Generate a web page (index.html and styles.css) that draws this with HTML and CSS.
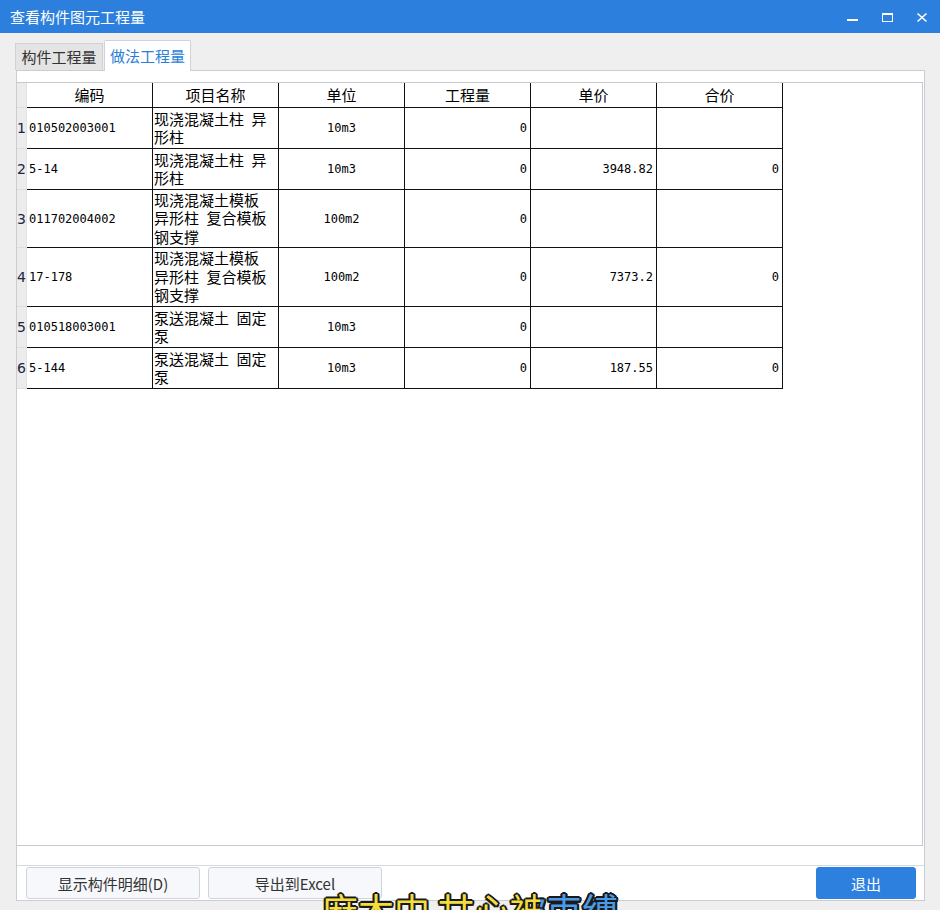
FILE: index.html
```html
<!DOCTYPE html>
<html lang="zh-CN">
<head>
<meta charset="utf-8">
<title>查看构件图元工程量</title>
<link rel="stylesheet" href="styles.css">
</head>
<body>
<div class="window">
  <div class="titlebar">
    <span class="title">查看构件图元工程量</span>
    <svg class="controls" width="100" height="33" viewBox="0 0 100 33">
      <rect x="7" y="19" width="11" height="2" fill="#fff"/>
      <rect x="42.5" y="13.5" width="10" height="8" fill="none" stroke="#fff" stroke-width="1"/>
      <rect x="42" y="13" width="11" height="2" fill="#fff"/>
      <path d="M77.5 13.5 L86.5 21.5 M86.5 13.5 L77.5 21.5" stroke="#fff" stroke-width="1.6" fill="none"/>
    </svg>
  </div>

  <div class="tabs">
    <div class="tab">构件工程量</div>
    <div class="tab active">做法工程量</div>
  </div>

  <div class="panel">
    <div class="panel-top"></div>
    <div class="gridbox">
      <div class="grid">
        <div class="rh"></div>
        <div class="hd">编码</div>
        <div class="hd">项目名称</div>
        <div class="hd">单位</div>
        <div class="hd">工程量</div>
        <div class="hd">单价</div>
        <div class="hd">合价</div>

        <div class="rh">1</div>
        <div class="c code">010502003001</div>
        <div class="c name">现浇混凝土柱&ensp;异<br>形柱</div>
        <div class="c unit">10m3</div>
        <div class="c num">0</div>
        <div class="c num"></div>
        <div class="c num"></div>

        <div class="rh">2</div>
        <div class="c code">5-14</div>
        <div class="c name">现浇混凝土柱&ensp;异<br>形柱</div>
        <div class="c unit">10m3</div>
        <div class="c num">0</div>
        <div class="c num">3948.82</div>
        <div class="c num">0</div>

        <div class="rh">3</div>
        <div class="c code">011702004002</div>
        <div class="c name">现浇混凝土模板<br>异形柱&ensp;复合模板<br>钢支撑</div>
        <div class="c unit">100m2</div>
        <div class="c num">0</div>
        <div class="c num"></div>
        <div class="c num"></div>

        <div class="rh">4</div>
        <div class="c code">17-178</div>
        <div class="c name">现浇混凝土模板<br>异形柱&ensp;复合模板<br>钢支撑</div>
        <div class="c unit">100m2</div>
        <div class="c num">0</div>
        <div class="c num">7373.2</div>
        <div class="c num">0</div>

        <div class="rh">5</div>
        <div class="c code">010518003001</div>
        <div class="c name">泵送混凝土&ensp;固定<br>泵</div>
        <div class="c unit">10m3</div>
        <div class="c num">0</div>
        <div class="c num"></div>
        <div class="c num"></div>

        <div class="rh">6</div>
        <div class="c code">5-144</div>
        <div class="c name">泵送混凝土&ensp;固定<br>泵</div>
        <div class="c unit">10m3</div>
        <div class="c num">0</div>
        <div class="c num">187.55</div>
        <div class="c num">0</div>
      </div>
    </div>
    <div class="panel-gap"></div>
    <div class="btnrow">
      <button class="btn">显示构件明细(D)</button>
      <button class="btn">导出到Excel</button>
      <button class="btn primary">退出</button>
    </div>
  </div>

  <div class="subtitle">麻木中 甘心被束缚</div>
  <div class="subtitle sub-blue">麻木中 甘心被束缚</div>
</div>
</body>
</html>
```

FILE: styles.css
```css
html, body {
  margin: 0;
  padding: 0;
}
body {
  width: 940px;
  height: 910px;
  overflow: hidden;
  background: #efefef;
  font-family: "Noto Sans CJK SC", "Noto Sans", sans-serif;
  color: #000;
}
.window {
  position: relative;
  width: 940px;
  height: 910px;
  overflow: hidden;
  background: #efefef;
}
.titlebar {
  height: 33px;
  background: #2c7fdc;
  display: flex;
  align-items: center;
  justify-content: space-between;
}
.title {
  color: #fff;
  font-size: 15px;
  padding-left: 10px;
  line-height: 33px;
}
.controls {
  display: block;
}
.tabs {
  display: flex;
  align-items: flex-end;
  height: 30px;
  margin-top: 7px;
  padding-left: 15px;
}
.tab {
  position: relative;
  box-sizing: border-box;
  height: 27px;
  width: 88px;
  padding: 0 5px;
  background: #e4e4e4;
  border: 1px solid #d2d2d2;
  border-bottom: none;
  color: #333;
  font-size: 15px;
  line-height: 26px;
  text-align: center;
}
.tab.active {
  z-index: 2;
  width: 87px;
  height: 31px;
  margin-left: 1px;
  margin-bottom: -1px;
  background: #fff;
  border-color: #cfd3d9;
  border-radius: 2px 2px 0 0;
  color: #2b7fd9;
  line-height: 30px;
}
.panel {
  margin-left: 16px;
  width: 909px;
  box-sizing: border-box;
  border: 1px solid #cacdd3;
  background: #fff;
  display: flex;
  flex-direction: column;
}
.panel-top {
  height: 11px;
}
.gridbox {
  height: 764px;
  box-sizing: border-box;
  margin-right: 1px;
  border: 1px solid #c6cad0;
  border-left: none;
  background: #fff;
}
.grid {
  display: grid;
  grid-template-columns: 10px repeat(6, 126px);
  grid-template-rows: 25px 41px 41px 58px 59px 41px 41px;
}
.grid > div {
  box-sizing: border-box;
  overflow: hidden;
}
.rh {
  background: #ececec;
  border-bottom: 1px solid #dedede;
  border-right: 1px solid #e2e2e2;
  font-family: "DejaVu Sans", sans-serif;
  font-size: 14px;
  color: #1c2740;
  display: flex;
  align-items: center;
  padding-left: 0;
  letter-spacing: -1px;
}
.hd {
  border-right: 1px solid #111;
  border-bottom: 1px solid #111;
  font-size: 15px;
  display: flex;
  align-items: center;
  justify-content: center;
  line-height: 18px;
}
.c {
  border-right: 1px solid #111;
  border-bottom: 1px solid #111;
  display: flex;
  align-items: center;
}
.code {
  font-family: "DejaVu Sans Mono", "Liberation Mono", monospace;
  font-size: 12px;
  padding-left: 2px;
}
.name {
  font-size: 15px;
  line-height: 18.5px;
  padding-left: 1px;
}
.unit {
  font-family: "DejaVu Sans Mono", "Liberation Mono", monospace;
  font-size: 12px;
  justify-content: center;
}
.num {
  font-family: "DejaVu Sans Mono", "Liberation Mono", monospace;
  font-size: 12px;
  justify-content: flex-end;
  padding-right: 3px;
}
.panel-gap {
  height: 19px;
}
.btnrow {
  height: 35px;
  box-sizing: border-box;
  border-top: 1px solid #d6d9de;
  padding: 0 8px 0 9px;
  display: flex;
  align-items: center;
}
.btn {
  box-sizing: border-box;
  width: 174px;
  height: 32px;
  margin: 0 8px 0 0;
  padding: 0;
  background: #f6f8fb;
  border: 1px solid #cfd4dc;
  border-radius: 3px;
  font-family: "Noto Sans CJK SC", "Noto Sans", sans-serif;
  font-size: 15px;
  color: #333;
}
.btn.primary {
  width: 100px;
  margin: 0 0 0 auto;
  background: #2e80de;
  border-color: #2e80de;
  color: #fff;
}
.subtitle {
  position: absolute;
  left: 322px;
  top: 889px;
  font-size: 36px;
  line-height: 40px;
  white-space: nowrap;
  color: #f4de3c;
  text-shadow:
    -1.5px -1.5px 0 #1a1a1a, 1.5px -1.5px 0 #1a1a1a,
    -1.5px 1.5px 0 #1a1a1a, 1.5px 1.5px 0 #1a1a1a,
    0 -2px 0 #1a1a1a, 0 2px 0 #1a1a1a,
    -2px 0 0 #1a1a1a, 2px 0 0 #1a1a1a;
  z-index: 5;
}
.sub-blue {
  color: #4a9be6;
  clip-path: inset(0 0 0 218px);
  z-index: 6;
}
```
